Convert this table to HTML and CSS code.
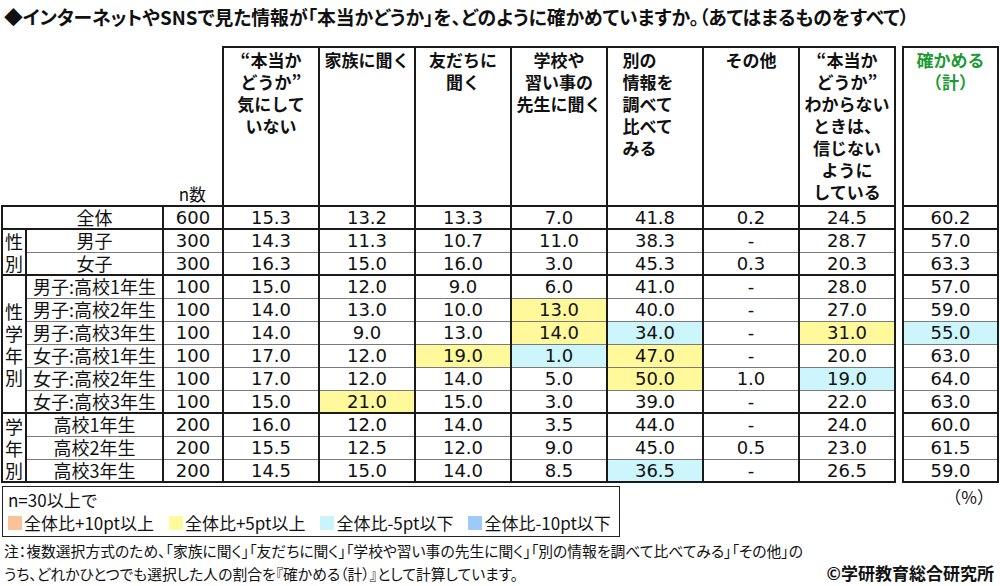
FILE: index.html
```html
<!DOCTYPE html>
<html lang="ja">
<head>
<meta charset="utf-8">
<link rel="stylesheet" href="styles.css">
</head>
<body>
<h1 class="title">◆インターネットやSNSで見た情報が「本当かどうか」を、どのように確かめていますか。（あてはまるものをすべて）</h1>
<table class="grid">
  <colgroup>
    <col class="c-grp"><col class="c-lab"><col class="c-n">
    <col class="c-d"><col class="c-d"><col class="c-d"><col class="c-d"><col class="c-d"><col class="c-d"><col class="c-d">
    <col class="c-gap"><col class="c-tot">
  </colgroup>
  <thead>
    <tr class="head">
      <th class="blank"></th><th class="blank"></th>
      <th class="ncell">n数</th>
      <th>“本当か<br>どうか”<br>気にして<br>いない</th>
      <th>家族に聞く</th>
      <th>友だちに<br>聞く</th>
      <th>学校や<br>習い事の<br>先生に聞く</th>
      <th><span class="left">別の<br>情報を<br>調べて<br>比べて<br>みる</span></th>
      <th>その他</th>
      <th>“本当か<br>どうか”<br>わからない<br>ときは、<br>信じない<br>ように<br>している</th>
      <th class="gap"></th>
      <th class="tot">確かめる<br>（計）</th>
    </tr>
  </thead>
  <tbody>
    <tr class="gs">
      <td class="lab all" colspan="2">全体</td><td>600</td>
      <td>15.3</td><td>13.2</td><td>13.3</td><td>7.0</td><td>41.8</td><td>0.2</td><td>24.5</td><td class="gap"></td><td>60.2</td>
    </tr>
    <tr class="gs">
      <td class="grp" rowspan="2">性<br>別</td><td class="lab">男子</td><td>300</td>
      <td>14.3</td><td>11.3</td><td>10.7</td><td>11.0</td><td>38.3</td><td>-</td><td>28.7</td><td class="gap"></td><td>57.0</td>
    </tr>
    <tr>
      <td class="lab">女子</td><td>300</td>
      <td>16.3</td><td>15.0</td><td>16.0</td><td>3.0</td><td>45.3</td><td>0.3</td><td>20.3</td><td class="gap"></td><td>63.3</td>
    </tr>
    <tr class="gs">
      <td class="grp" rowspan="6">性<br>学<br>年<br>別</td><td class="lab">男子:高校1年生</td><td>100</td>
      <td>15.0</td><td>12.0</td><td>9.0</td><td>6.0</td><td>41.0</td><td>-</td><td>28.0</td><td class="gap"></td><td>57.0</td>
    </tr>
    <tr>
      <td class="lab">男子:高校2年生</td><td>100</td>
      <td>14.0</td><td>13.0</td><td>10.0</td><td class="y">13.0</td><td>40.0</td><td>-</td><td>27.0</td><td class="gap"></td><td>59.0</td>
    </tr>
    <tr>
      <td class="lab">男子:高校3年生</td><td>100</td>
      <td>14.0</td><td>9.0</td><td>13.0</td><td class="y">14.0</td><td class="b">34.0</td><td>-</td><td class="y">31.0</td><td class="gap"></td><td class="b">55.0</td>
    </tr>
    <tr>
      <td class="lab">女子:高校1年生</td><td>100</td>
      <td>17.0</td><td>12.0</td><td class="y">19.0</td><td class="b">1.0</td><td class="y">47.0</td><td>-</td><td>20.0</td><td class="gap"></td><td>63.0</td>
    </tr>
    <tr>
      <td class="lab">女子:高校2年生</td><td>100</td>
      <td>17.0</td><td>12.0</td><td>14.0</td><td>5.0</td><td class="y">50.0</td><td>1.0</td><td class="b">19.0</td><td class="gap"></td><td>64.0</td>
    </tr>
    <tr>
      <td class="lab">女子:高校3年生</td><td>100</td>
      <td>15.0</td><td class="y">21.0</td><td>15.0</td><td>3.0</td><td>39.0</td><td>-</td><td>22.0</td><td class="gap"></td><td>63.0</td>
    </tr>
    <tr class="gs">
      <td class="grp" rowspan="3">学<br>年<br>別</td><td class="lab">高校1年生</td><td>200</td>
      <td>16.0</td><td>12.0</td><td>14.0</td><td>3.5</td><td>44.0</td><td>-</td><td>24.0</td><td class="gap"></td><td>60.0</td>
    </tr>
    <tr>
      <td class="lab">高校2年生</td><td>200</td>
      <td>15.5</td><td>12.5</td><td>12.0</td><td>9.0</td><td>45.0</td><td>0.5</td><td>23.0</td><td class="gap"></td><td>61.5</td>
    </tr>
    <tr class="last">
      <td class="lab">高校3年生</td><td>200</td>
      <td>14.5</td><td>15.0</td><td>14.0</td><td>8.5</td><td class="b">36.5</td><td>-</td><td>26.5</td><td class="gap"></td><td>59.0</td>
    </tr>
  </tbody>
</table>
<div class="below">
  <div class="legend">
    <div class="leg-line">n=30以上で</div>
    <div class="leg-line items">
      <span class="item"><span class="sw sw-o"></span>全体比+10pt以上</span>
      <span class="item"><span class="sw sw-y"></span>全体比+5pt以上</span>
      <span class="item"><span class="sw sw-c"></span>全体比-5pt以下</span>
      <span class="item"><span class="sw sw-b"></span>全体比-10pt以下</span>
    </div>
  </div>
  <div class="unit">（%）</div>
</div>
<div class="notes">
  <p>注：複数選択方式のため、「家族に聞く」「友だちに聞く」「学校や習い事の先生に聞く」「別の情報を調べて比べてみる」「その他」の</p>
  <div class="lastline">
    <p>うち、どれかひとつでも選択した人の割合を『確かめる（計）』として計算しています。</p>
    <span class="copy">©学研教育総合研究所</span>
  </div>
</div>
</body>
</html>
```
FILE: styles.css
```css
* { box-sizing: border-box; }
html, body { margin: 0; padding: 0; background: #fff; }
body {
  width: 1000px;
  height: 586px;
  overflow: hidden;
  font-family: "Noto Sans CJK JP", "Noto Sans", sans-serif;
  color: #111;
}
.title {
  margin: 0 0 0 4px;
  padding-top: 5px;
  height: 46px;
  font-size: 18.8px;
  line-height: 24px;
  font-weight: 700;
  font-feature-settings: "palt";
  white-space: nowrap;
}
.grid {
  border-collapse: collapse;
  table-layout: fixed;
  width: 998px;
  margin-left: 1px;
}
.c-grp { width: 24px; }
.c-lab { width: 137px; }
.c-n { width: 60px; }
.c-d { width: 96px; }
.c-gap { width: 8px; }
.c-tot { width: 95px; }

.grid th {
  height: 159px;
  vertical-align: top;
  font-size: 17px;
  line-height: 22px;
  font-weight: 700;
  text-align: center;
  padding: 1px 0 0;
  border: 2px solid #1a1a1a;
  white-space: nowrap;
}
.grid th.blank { border: none; }
.grid th.ncell {
  border: none;
  vertical-align: bottom;
  text-align: right;
  padding: 0 16px 0 0;
  font-weight: 400;
  font-size: 17px;
  line-height: 22px;
}
.grid .gap { border: none !important; background: #fff; }
.grid th.tot { color: #1d9a34; }
.left { display: inline-block; text-align: left; margin-left: -14px; }

.grid td {
  height: 23px;
  padding: 0;
  font-family: "DejaVu Sans", "Noto Sans CJK JP", sans-serif;
  font-size: 18px;
  line-height: 21px;
  text-align: center;
  border-left: 2px solid #1a1a1a;
  border-right: 2px solid #1a1a1a;
  border-top: 1px solid #7a7a7a;
  border-bottom: 1px solid #7a7a7a;
  white-space: nowrap;
}
.grid tr.gs td { border-top: 2px solid #1a1a1a; }
.grid tr.last td { border-bottom: 2px solid #1a1a1a; }
.grid td.grp {
  font-family: "Noto Sans CJK JP", sans-serif;
  border: 2px solid #1a1a1a;
  font-size: 18px;
  line-height: 22px;
  vertical-align: middle;
}
.grid td.lab {
  font-family: "Noto Sans CJK JP", sans-serif;
  font-size: 18px;
}
.grid td.all { padding-left: 24px; }
.grid td.y { background: #fff99c; }
.grid td.b { background: #cdf5fc; }

.below {
  display: flex;
  justify-content: space-between;
  align-items: flex-start;
  margin-top: 3px;
  padding-left: 2px;
  padding-right: 6px;
}
.legend {
  width: 618px;
  height: 51px;
  border: 1.5px solid #222;
  padding: 1px 0 0 5px;
}
.leg-line {
  font-size: 17px;
  line-height: 23px;
  white-space: nowrap;
}
.items { display: flex; gap: 15px; }
.item { display: inline-flex; align-items: center; }
.sw {
  display: inline-block;
  width: 14px;
  height: 14px;
  margin-right: 2px;
}
.sw-o { background: #f9c39a; }
.sw-y { background: #fffa9c; }
.sw-c { background: #c9f4fc; }
.sw-b { background: #9dcaf6; }
.unit {
  font-size: 17px;
  line-height: 22px;
  padding-top: 0;
}
.notes {
  margin-top: 3px;
  padding-left: 4px;
  padding-right: 6px;
}
.notes p {
  margin: 0;
  font-size: 14.8px;
  line-height: 22px;
  font-feature-settings: "palt";
  white-space: nowrap;
}
.lastline {
  display: flex;
  justify-content: space-between;
  align-items: baseline;
}
.copy {
  font-size: 17px;
  font-weight: 700;
  line-height: 22px;
}
```
